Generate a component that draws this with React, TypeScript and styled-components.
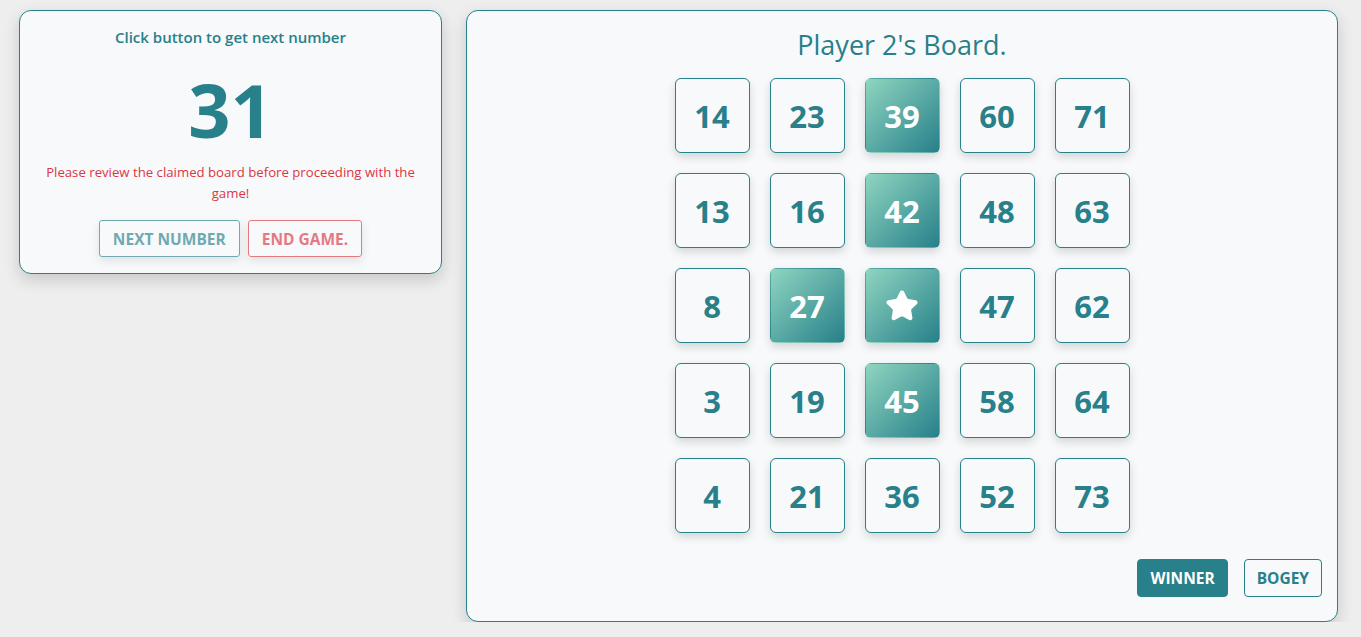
import React from 'react';
import styled, { createGlobalStyle } from 'styled-components';
import { Star } from 'lucide-react';

const teal = '#27808a';

const GlobalStyle = createGlobalStyle`
  * { box-sizing: border-box; }
  body {
    margin: 0;
    background: #eeeeee;
    font-family: 'Open Sans', 'Noto Sans', sans-serif;
  }
`;

const Page = styled.div`
  display: flex;
  align-items: flex-start;
  gap: 24px;
  padding: 10px 23px 0 19px;
`;

const Card = styled.div`
  background: #f8f9fa;
  border: 1px solid ${teal};
  border-radius: 12px;
  box-shadow: 0 6px 16px rgba(0, 0, 0, 0.16);
`;

const ControlCard = styled(Card)`
  width: 423px;
  flex-shrink: 0;
  padding: 15px 20px 16px;
  display: flex;
  flex-direction: column;
  align-items: center;
  text-align: center;
`;

const Prompt = styled.div`
  font-size: 15px;
  line-height: 22px;
  font-weight: 600;
  color: ${teal};
`;

const CurrentNumber = styled.div`
  margin-top: 24px;
  font-size: 74px;
  line-height: 76px;
  font-weight: 700;
  color: ${teal};
`;

const Warning = styled.div`
  margin-top: 14px;
  font-size: 13.2px;
  line-height: 21px;
  color: #dc3545;
`;

const ButtonRow = styled.div`
  display: flex;
  gap: 8px;
  margin-top: 16px;
`;

const Button = styled.button<{ $variant: 'teal' | 'red' | 'solid' }>`
  height: 37px;
  padding: 0 13px;
  font-family: inherit;
  font-size: 15.5px;
  font-weight: 700;
  text-transform: uppercase;
  border-radius: 3px;
  cursor: pointer;
  border: 1px solid ${(p) => (p.$variant === 'red' ? '#dc3545' : teal)};
  color: ${(p) => (p.$variant === 'red' ? '#dc3545' : p.$variant === 'solid' ? '#fff' : teal)};
  background: ${(p) => (p.$variant === 'solid' ? teal : 'transparent')};
`;

const DisabledButton = styled(Button)`
  opacity: 0.65;
  box-shadow: 0 4px 10px rgba(0, 0, 0, 0.14);
`;

const BoardCard = styled(Card)`
  flex: 1;
  padding: 17px 15px 24px;
  display: flex;
  flex-direction: column;
  align-items: center;
`;

const BoardTitle = styled.div`
  font-size: 27px;
  line-height: 34px;
  font-weight: 500;
  color: ${teal};
`;

const Grid = styled.div`
  margin-top: 16px;
  display: grid;
  grid-template-columns: repeat(5, 75px);
  grid-auto-rows: 75px;
  gap: 20px;
`;

const Cell = styled.div<{ $marked: boolean }>`
  display: flex;
  align-items: center;
  justify-content: center;
  border-radius: 6px;
  font-size: 31px;
  font-weight: 700;
  box-shadow: 0 4px 10px rgba(0, 0, 0, 0.15);
  border: 1px solid ${(p) => (p.$marked ? 'transparent' : teal)};
  color: ${(p) => (p.$marked ? '#ffffff' : teal)};
  background: ${(p) =>
    p.$marked ? `linear-gradient(135deg, #8fd5c0 0%, ${teal} 100%)` : '#f8f9fa'};
`;

const Actions = styled.div`
  align-self: flex-end;
  display: flex;
  gap: 16px;
  margin-top: 26px;
`;

const ActionButton = styled(Button)`
  height: 38px;
  padding: 0 12px;
  border-radius: 4px;
`;

const board: (number | null)[][] = [
  [14, 23, 39, 60, 71],
  [13, 16, 42, 48, 63],
  [8, 27, null, 47, 62],
  [3, 19, 45, 58, 64],
  [4, 21, 36, 52, 73],
];

const marked = new Set<number | null>([39, 42, 27, null, 45]);

const App = () => {
  return (
    <>
      <GlobalStyle />
      <Page>
        <ControlCard>
          <Prompt>Click button to get next number</Prompt>
          <CurrentNumber>31</CurrentNumber>
          <Warning>Please review the claimed board before proceeding with the game!</Warning>
          <ButtonRow>
            <DisabledButton $variant="teal" disabled>
              Next Number
            </DisabledButton>
            <DisabledButton $variant="red" disabled>
              End Game.
            </DisabledButton>
          </ButtonRow>
        </ControlCard>
        <BoardCard>
          <BoardTitle>Player 2's Board.</BoardTitle>
          <Grid>
            {board.flat().map((n, i) => (
              <Cell key={i} $marked={marked.has(n)}>
                {n === null ? (
                  <Star size={34} fill="#ffffff" color="#ffffff" strokeWidth={2} />
                ) : (
                  n
                )}
              </Cell>
            ))}
          </Grid>
          <Actions>
            <ActionButton $variant="solid">Winner</ActionButton>
            <ActionButton $variant="teal">Bogey</ActionButton>
          </Actions>
        </BoardCard>
      </Page>
    </>
  );
};

export default App;
